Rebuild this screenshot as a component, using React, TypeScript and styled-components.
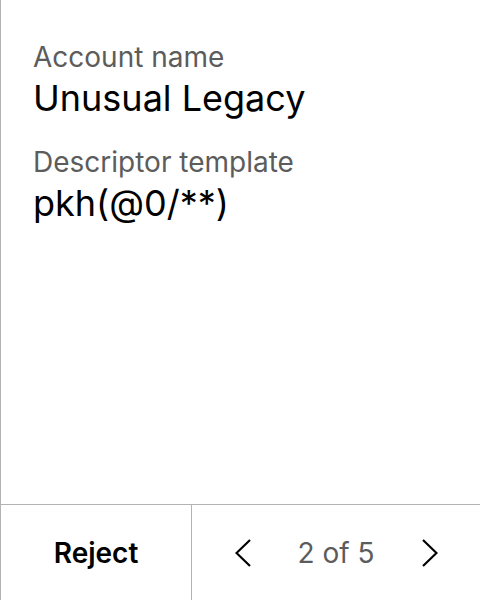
import styled, { createGlobalStyle } from 'styled-components';

const GlobalStyle = createGlobalStyle`
  html, body {
    margin: 0;
    padding: 0;
    background: #fff;
  }
  body {
    font-family: Inter, "Noto Sans", sans-serif;
  }
`;

const Screen = styled.div`
  width: 480px;
  height: 600px;
  box-sizing: border-box;
  border-left: 1px solid #b3b3b3;
  display: flex;
  flex-direction: column;
  background: #fff;
`;

const Content = styled.div`
  flex: 1;
  padding: 40px 32px 0 32px;
  display: flex;
  flex-direction: column;
  gap: 25px;
`;

const Field = styled.div`
  display: flex;
  flex-direction: column;
  gap: 2px;
`;

const Label = styled.div`
  font-size: 28px;
  line-height: 34px;
  color: #5c5c5c;
`;

const Value = styled.div`
  font-size: 36px;
  line-height: 44px;
  color: #000;
`;

const Footer = styled.div`
  height: 95px;
  border-top: 1px solid #b3b3b3;
  display: grid;
  grid-template-columns: 191px 1fr;
`;

const RejectButton = styled.button`
  border: none;
  border-right: 1px solid #b3b3b3;
  background: none;
  font-family: inherit;
  font-size: 28px;
  font-weight: 600;
  color: #000;
  cursor: pointer;
`;

const Pager = styled.div`
  display: flex;
  align-items: center;
  justify-content: center;
  gap: 47px;
`;

const ArrowButton = styled.button`
  border: none;
  background: none;
  padding: 0;
  display: flex;
  cursor: pointer;
`;

const PageText = styled.span`
  font-size: 28px;
  color: #5c5c5c;
`;

function Chevron({ dir }: { dir: 'left' | 'right' }) {
  const d = dir === 'left' ? 'M15 1 L1.5 14 L15 27' : 'M1 1 L14.5 14 L1 27';
  return (
    <svg width="16" height="28" viewBox="0 0 16 28" fill="none">
      <path d={d} stroke="#000" strokeWidth="2.2" />
    </svg>
  );
}

export default function App() {
  return (
    <>
      <GlobalStyle />
      <Screen>
        <Content>
          <Field>
            <Label>Account name</Label>
            <Value>Unusual Legacy</Value>
          </Field>
          <Field>
            <Label>Descriptor template</Label>
            <Value>pkh(@0/**)</Value>
          </Field>
        </Content>
        <Footer>
          <RejectButton>Reject</RejectButton>
          <Pager>
            <ArrowButton aria-label="Previous">
              <Chevron dir="left" />
            </ArrowButton>
            <PageText>2 of 5</PageText>
            <ArrowButton aria-label="Next">
              <Chevron dir="right" />
            </ArrowButton>
          </Pager>
        </Footer>
      </Screen>
    </>
  );
}
